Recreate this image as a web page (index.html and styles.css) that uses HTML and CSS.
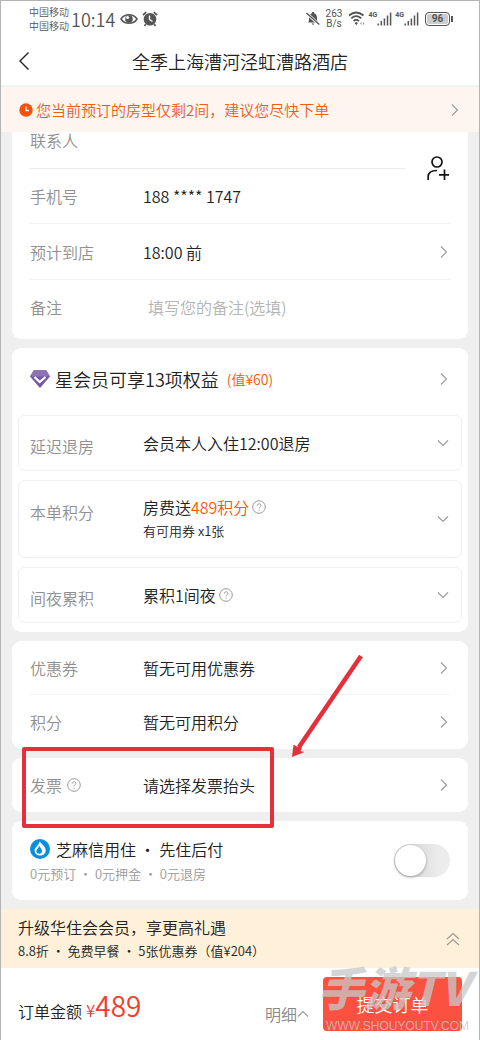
FILE: index.html
```html
<!DOCTYPE html>
<html lang="zh-CN">
<head>
<meta charset="utf-8">
<meta name="viewport" content="width=device-width, initial-scale=1">
<title>全季上海漕河泾虹漕路酒店</title>
<link rel="stylesheet" href="styles.css">
</head>
<body>
<svg class="defs" aria-hidden="true">
  <symbol id="right" viewBox="0 0 8 14"><path d="M1 1.500 6.500 7 1 12.500"/></symbol>
  <symbol id="down" viewBox="0 0 12 8"><path d="M1 1.500 6 6.500 11 1.500"/></symbol>
  <symbol id="help" viewBox="0 0 14 14"><circle cx="7" cy="7" r="6.300"/><path d="M5.200 5.600C5.200 3.200 8.900 3.200 8.900 5.500 8.900 6.800 7 6.800 7 8.400M7 9.700V10.700"/></symbol>
  <symbol id="signal" viewBox="0 0 15 14"><path d="M1.200 11.500V13.500M4.300 9V13.500M7.400 6.500V13.500M10.500 3.500V13.500M13.600.5V13.500"/></symbol>
</svg>
<div class="screen">
  <div class="status">
    <div class="carriers"><span>中国移动</span><span>中国移动</span></div>
    <span class="time">10:14</span>
    <svg class="eye" viewBox="0 0 18 12"><path d="M1 6C4.500.3 13.500.3 17 6 13.500 11.700 4.500 11.700 1 6Z" fill="none" stroke="#555" stroke-width="1.500"/><circle cx="9" cy="6" r="3.800" fill="#555"/><circle cx="7.600" cy="4.400" r="1.500" fill="#fff"/></svg>
    <svg class="alarm" viewBox="0 0 16 16"><circle cx="8" cy="8.300" r="6.300" fill="#555"/><path d="M1 4.200 4.200 1.200M15 4.200 11.800 1.200M3.800 13.200 2.500 15M12.200 13.200 13.500 15" stroke="#555" stroke-width="1.800"/><path d="M7.500 4.500V8.500L10.500 10.500" fill="none" stroke="#fff" stroke-width="1.300"/></svg>
    <div class="status-right">
      <svg class="bell" viewBox="0 0 14 15"><path d="M2 11.500C3.200 10.500 3 9 3 6.500 3 4 4.500 2.500 6 2.200V1H8V2.200C9.800 2.500 11 4.200 11 6.500 11 9 11 10.500 12 11.500ZM5.500 12.500H8.500L7 14Z" fill="#555"/><path d="M.5 2 13 13.500" stroke="#fff" stroke-width="3"/><path d="M.5 2 13.300 13.500" stroke="#555" stroke-width="1.300"/></svg>
      <div class="speed"><span>263</span><span>B/s</span></div>
      <svg class="wifi" viewBox="0 0 17 15"><path d="M1 4.500Q8-1.500 15.500 4.500M3.300 7.300Q8 3 13.200 7.300M5.600 10Q8 7.800 11 10" fill="none" stroke="#555" stroke-width="1.800"/><path d="M6.500 12 8.300 10.900 10 12 8.300 14Z" fill="#555"/><path d="M12 12.500 13.500 11V14M16.500 12.500 15 11V14" fill="#999"/></svg>
      <div class="net"><small>4G</small><svg class="bars"><use href="#signal"/></svg></div>
      <div class="net"><small>4G</small><svg class="bars"><use href="#signal"/></svg></div>
      <div class="battery">96</div>
    </div>
  </div>

  <header class="header">
    <button class="back" aria-label="返回"><svg viewBox="0 0 12 20"><path d="M10.500 1.500 2 10 10.500 18.500"/></svg></button>
    <h1>全季上海漕河泾虹漕路酒店</h1>
  </header>

  <button class="notice">
    <svg class="clock" viewBox="0 0 14 14"><circle cx="7" cy="7" r="6.700" fill="#f4510b"/><path d="M7 3.500V7.500H10" fill="none" stroke="#fff" stroke-width="1.300"/></svg>
    <span class="grow">您当前预订的房型仅剩2间，建议您尽快下单</span>
    <svg class="right"><use href="#right"/></svg>
  </button>

  <main class="content">
    <section class="card contact">
      <div class="people">
        <div class="row first"><span class="label">联系人</span></div>
        <button class="add" aria-label="选择联系人"><svg viewBox="0 0 24 26"><circle cx="11" cy="6" r="5"/><path d="M2.200 24V20.500C2.200 16.500 5 14.500 11 14.500M18.500 13.500V24M13 18.800H23"/></svg></button>
      </div>
      <div class="row line"><span class="label">手机号</span><span class="value">188 **** 1747</span></div>
      <button class="row line"><span class="label">预计到店</span><span class="value">18:00 前</span><svg class="right"><use href="#right"/></svg></button>
      <div class="row remark"><label class="label" for="remark">备注</label><input id="remark" type="text" placeholder="填写您的备注(选填)"></div>
    </section>

    <section class="card benefits">
      <button class="benefit-title">
        <svg class="gem" viewBox="0 0 20 18"><path d="M4 0H16L20 6.500 10 18 0 6.500Z" fill="#7656a5"/><path d="M4 0H16L20 6.500H0Z" fill="#8d72b4"/><path d="M4.500 7 9.700 12 15.500 7" fill="none" stroke="#fff" stroke-width="2.200"/></svg>
        <span>星会员可享13项权益</span><em>(值¥60)</em>
        <svg class="right"><use href="#right"/></svg>
      </button>
      <button class="box"><span class="label">延迟退房</span><span class="value">会员本人入住12:00退房</span><svg class="down"><use href="#down"/></svg></button>
      <button class="box tall"><span class="label">本单积分</span><span class="value"><span class="with-help">房费送<em>489积分</em><svg class="help"><use href="#help"/></svg></span><small>有可用券 x1张</small></span><svg class="down"><use href="#down"/></svg></button>
      <button class="box"><span class="label">间夜累积</span><span class="value with-help">累积1间夜<svg class="help"><use href="#help"/></svg></span><svg class="down"><use href="#down"/></svg></button>
    </section>

    <section class="card">
      <button class="row line"><span class="label">优惠券</span><span class="value">暂无可用优惠券</span><svg class="right"><use href="#right"/></svg></button>
      <button class="row"><span class="label">积分</span><span class="value">暂无可用积分</span><svg class="right"><use href="#right"/></svg></button>
    </section>

    <section class="card invoice">
      <button class="row"><span class="label with-help wide">发票<svg class="help"><use href="#help"/></svg></span><span class="value">请选择发票抬头</span><svg class="right"><use href="#right"/></svg></button>
      <div class="mark"></div>
      <svg class="arrow" viewBox="0 0 74 104"><path d="M70 1 8 92" stroke="#e42f3c" stroke-width="4.500"/><path d="M1 102 2.500 89.500 6.500 92 9 90 11 93 9.500 96 13.500 97Z" fill="#e42f3c"/></svg>
    </section>

    <section class="card credit">
      <div>
        <label class="credit-title" for="credit"><svg class="drop" viewBox="0 0 20 20"><circle cx="10" cy="10" r="10" fill="#078fdb"/><path d="M9.500 2.500C13 6 15.800 8.500 15.800 11.500A5.700 5.700 0 0 1 4.500 11.500C4.500 8.500 8.500 7 9.500 2.500Z" fill="#fff"/><path d="M9.300 6.500C9.300 8.500 12 9.500 12 12A2.800 2.800 0 0 1 6.400 12C6.400 10 8.800 9.500 9.300 6.500Z" fill="#078fdb"/></svg>芝麻信用住 · 先住后付</label>
        <p>0元预订 · 0元押金 · 0元退房</p>
      </div>
      <input class="switch" id="credit" type="checkbox" role="switch">
    </section>
  </main>

  <button class="upgrade">
    <span class="grow"><strong>升级华住会会员，享更高礼遇</strong><span>8.8折 · 免费早餐 · 5张优惠券（值¥204）</span></span>
    <svg class="double" viewBox="0 0 14 14"><path d="M1 7 7 1.500 13 7M1 13 7 7.500 13 13"/></svg>
  </button>

  <footer class="footer">
    <span class="total-label">订单金额</span><span class="total"><small>¥</small>489</span>
    <button class="detail">明细<svg class="up"><use href="#down"/></svg></button>
    <button class="submit">提交订单</button>
    <div class="watermark" aria-hidden="true"><b>手游TV</b><span>WWW.SHOUYOUTV.COM</span></div>
  </footer>
</div>
</body>
</html>
```
FILE: styles.css
```css
* { box-sizing: border-box; }
body {
  margin: 0;
  background: #fff;
  color: #222;
  font: 350 16px/24px "Noto Sans CJK SC", sans-serif;
}
button, input {
  margin: 0;
  padding: 0;
  border: 0;
  background: none;
  color: inherit;
  font: inherit;
  text-align: left;
}
h1, p { margin: 0; font-weight: inherit; }
em { color: #ee5a08; font-style: normal; }
svg { flex: none; fill: none; }
.defs { position: absolute; width: 0; height: 0; }
.screen { border: 1px solid #b4b4b4; background: #fff; }
.grow { flex: 1; }

.status {
  display: flex;
  align-items: center;
  height: 35px;
  padding: 0 28px;
  color: #555;
}
.carriers, .speed { display: flex; flex-direction: column; font-size: 10px; line-height: 14px; }
.time { margin: 0 5px 0 2px; font-size: 18px; }
.eye { width: 18px; height: 12px; margin-right: 4px; }
.alarm { width: 16px; height: 16px; }
.status-right { display: flex; align-items: center; gap: 6px; margin-left: auto; }
.bell { width: 14px; height: 15px; }
.speed { font-family: Roboto, sans-serif; font-weight: 400; line-height: 10px; text-align: center; }
.wifi { width: 17px; height: 15px; }
.status-right .net { display: flex; align-items: flex-start; margin-left: -3px; }
.net small { font: 700 7px/7px Roboto, sans-serif; }
.bars { width: 15px; height: 14px; stroke: #555; stroke-width: 1.5; }
.battery {
  position: relative;
  width: 25px;
  height: 14px;
  margin-right: 1px;
  border: 1px solid #555;
  border-radius: 4px;
  background: #ccc;
  box-shadow: inset 0 0 0 1px #fff;
  font: 700 10px/12px Roboto, sans-serif;
  text-align: center;
}
.battery::after { content: ""; position: absolute; right: -4px; top: 3px; width: 2px; height: 6px; background: #555; }

.header { display: flex; align-items: center; height: 51px; padding: 0 17px; border-bottom: 2px solid #f2f2f2; }
.back { width: 14px; height: 22px; }
.back svg { display: block; width: 12px; height: 20px; stroke: #222; stroke-width: 1.4; }
.header h1 { flex: 1; margin-right: 14px; font-size: 18px; text-align: center; }

.notice { display: flex; align-items: center; gap: 3px; width: 100%; height: 45px; padding: 0 20px 0 18px; background: #fff5f0; color: #ea5e16; font-size: 15px; }
.clock { width: 14px; height: 14px; }
.right { width: 8px; height: 14px; stroke: #999; stroke-width: 1.1; }
.down, .up { width: 12px; height: 8px; stroke: #999; stroke-width: 1.1; }
.help { width: 14px; height: 14px; stroke: #999; stroke-width: 1; }

.content { display: flex; flex-direction: column; gap: 9px; padding: 0 11px 9px; background: #efefef; }
.card { padding: 0 18px; border-radius: 9px; background: #fff; }
.row { display: flex; align-items: center; width: 100%; height: 54px; padding-right: 2px; }
.line { border-bottom: 1px solid #f2f2f2; }
.label { flex: none; width: 113px; color: #909090; }
.value { flex: 1; }
.right { margin-left: auto; }
.with-help { display: flex; align-items: center; gap: 3px; }
.with-help em { margin-left: -3px; }
.wide { gap: 5px; }

.contact { border-radius: 0 0 9px 9px; }
.people { display: flex; height: 36px; }
.people .row { flex: 1; align-items: flex-start; height: 37px; border-bottom: 1px solid #ececec; line-height: 16px; }
.add { width: 24px; height: 26px; margin: 24px 0 0 21px; }
.add svg { display: block; width: 24px; height: 26px; stroke: #111; stroke-width: 1.7; }
.contact .line { height: 56px; }
.remark { height: 59px; padding-bottom: 6px; }
.remark input { flex: 1; min-width: 0; padding-left: 5px; outline: 0; }
.remark input::placeholder { color: #b4b4b4; opacity: 1; }

.benefits { display: flex; flex-direction: column; gap: 9px; padding: 0 6px 9px; }
.benefit-title { display: flex; align-items: center; height: 58px; padding: 3px 14px 0 12px; font-size: 18px; }
.gem { width: 20px; height: 18px; margin-right: 5px; }
.benefit-title em { margin-left: 8px; font-size: 14px; }
.box { display: flex; align-items: center; width: 100%; height: 56px; padding: 0 12px 0 11px; border: 1px solid #efefef; border-radius: 7px; }
.box .label { padding-top: 6px; }
.tall { height: 78px; }
.tall .label { padding: 0 0 14px; }
.value small { display: block; font-size: 13px; }

.invoice { position: relative; }
.mark { position: absolute; left: 10px; top: -11px; width: 252px; height: 81px; border: 4px solid #e42f3c; border-radius: 2px; }
.arrow { position: absolute; left: 279px; top: -103px; width: 74px; height: 104px; }

.credit { display: flex; align-items: center; justify-content: space-between; height: 79px; }
.credit-title { display: flex; align-items: center; gap: 6px; line-height: 26px; }
.drop { width: 20px; height: 20px; }
.credit p { color: #999; font-size: 13px; }
.switch { appearance: none; width: 56px; height: 33px; border-radius: 17px; background: linear-gradient(90deg, #ccc, #ececec 80%); }
.switch::before { content: ""; display: block; width: 31px; height: 31px; margin: 1px; border-radius: 50%; background: #fff; box-shadow: 0 1px 3px #999; }
.switch:checked::before { margin-left: 24px; }

.upgrade { display: flex; align-items: center; width: 100%; height: 59px; padding: 0 19px 0 17px; background: #fef0d9; }
.upgrade strong, .upgrade span span { display: block; font-weight: inherit; }
.upgrade span span { font-size: 13px; }
.double { width: 14px; height: 14px; stroke: #999; stroke-width: 1.1; }

.footer { position: relative; display: flex; align-items: center; height: 72px; padding: 0 17px; }
.total-label { padding-top: 14px; }
.total { padding: 6px 0 0 4px; color: #f13d29; font-size: 28px; line-height: 36px; }
.total small { font-size: 17px; }
.detail { display: flex; align-items: center; margin-left: auto; padding-top: 20px; color: #888; }
.up { transform: rotate(180deg); }
.submit { width: 139px; height: 54px; margin-left: 14px; border-radius: 4px; background: #fb5140; color: #fff; font-size: 18px; text-align: center; }
.watermark { position: absolute; right: 10px; bottom: 4px; display: flex; flex-direction: column; align-items: flex-end; color: rgba(200, 200, 200, .75); pointer-events: none; white-space: nowrap; }
.watermark b { font-size: 46px; font-style: italic; font-weight: 900; line-height: 60px; }
.watermark span { font: 400 12px/20px "Liberation Sans", sans-serif; }
```
